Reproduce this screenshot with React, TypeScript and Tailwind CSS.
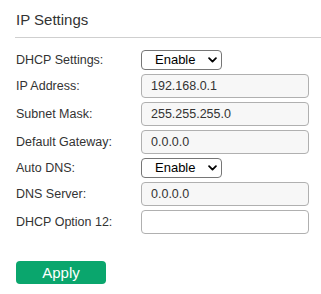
import { useState } from 'react';

type Row =
  | { label: string; kind: 'select'; value: string }
  | { label: string; kind: 'input'; value: string; disabled?: boolean };

const rows: Row[] = [
  { label: 'DHCP Settings:', kind: 'select', value: 'Enable' },
  { label: 'IP Address:', kind: 'input', value: '192.168.0.1', disabled: true },
  { label: 'Subnet Mask:', kind: 'input', value: '255.255.255.0', disabled: true },
  { label: 'Default Gateway:', kind: 'input', value: '0.0.0.0', disabled: true },
  { label: 'Auto DNS:', kind: 'select', value: 'Enable' },
  { label: 'DNS Server:', kind: 'input', value: '0.0.0.0', disabled: true },
  { label: 'DHCP Option 12:', kind: 'input', value: '' },
];

function App() {
  const [values, setValues] = useState(rows.map((r) => r.value));

  const update = (i: number, v: string) => {
    setValues((prev) => prev.map((p, j) => (j === i ? v : p)));
  };

  return (
    <div className="min-h-screen bg-white pl-[15px] font-['Liberation_Sans',Arial,sans-serif] text-[#333]">
      {/* Header */}
      <div className="border-b border-[#cfcfcf] pl-px pt-[11px] pb-[8px]">
        <h1 className="text-[15px] leading-[18px]">IP Settings</h1>
      </div>

      {/* Form */}
      <div className="mt-[12px] flex flex-col gap-[4px]">
        {rows.map((row, i) => (
          <div key={row.label} className="flex items-center">
            <label className="w-[126px] pl-px text-[12.5px] leading-[16px]">{row.label}</label>
            {row.kind === 'select' ? (
              <div className="relative h-[20px] w-[81px]">
                <select
                  value={values[i]}
                  onChange={(e) => update(i, e.target.value)}
                  className="block h-[20px] w-[81px] appearance-none rounded-[4px] border border-[#767676] bg-white py-px pl-[13px] text-[13px] leading-[16px] text-black outline-none"
                >
                  <option>Enable</option>
                  <option>Disable</option>
                </select>
                <svg
                  viewBox="0 0 10 6"
                  className="pointer-events-none absolute right-[5px] top-[7px] h-[6px] w-[9px]"
                  fill="none"
                  stroke="#000"
                  strokeWidth="2"
                  strokeLinecap="round"
                  strokeLinejoin="round"
                >
                  <path d="M1.2 1 L5 4.8 L8.8 1" />
                </svg>
              </div>
            ) : (
              <input
                value={values[i]}
                disabled={row.disabled}
                onChange={(e) => update(i, e.target.value)}
                className={
                  row.disabled
                    ? 'block h-[24px] w-[168px] rounded-[4px] border border-[#b0b0b0] bg-[#f7f7f7] px-[9px] text-[12.5px] text-[#333] outline-none'
                    : 'block h-[24px] w-[168px] rounded-[4px] border border-[#b0b0b0] bg-white px-[9px] text-[12.5px] text-[#333] outline-none'
                }
              />
            )}
          </div>
        ))}
      </div>

      {/* Actions */}
      <div className="mt-[27px] pl-px">
        <button className="block h-[23px] w-[90px] rounded-[4px] bg-[#0aa66d] text-[15px] leading-[23px] text-white">
          Apply
        </button>
      </div>
    </div>
  );
}

export default App;
